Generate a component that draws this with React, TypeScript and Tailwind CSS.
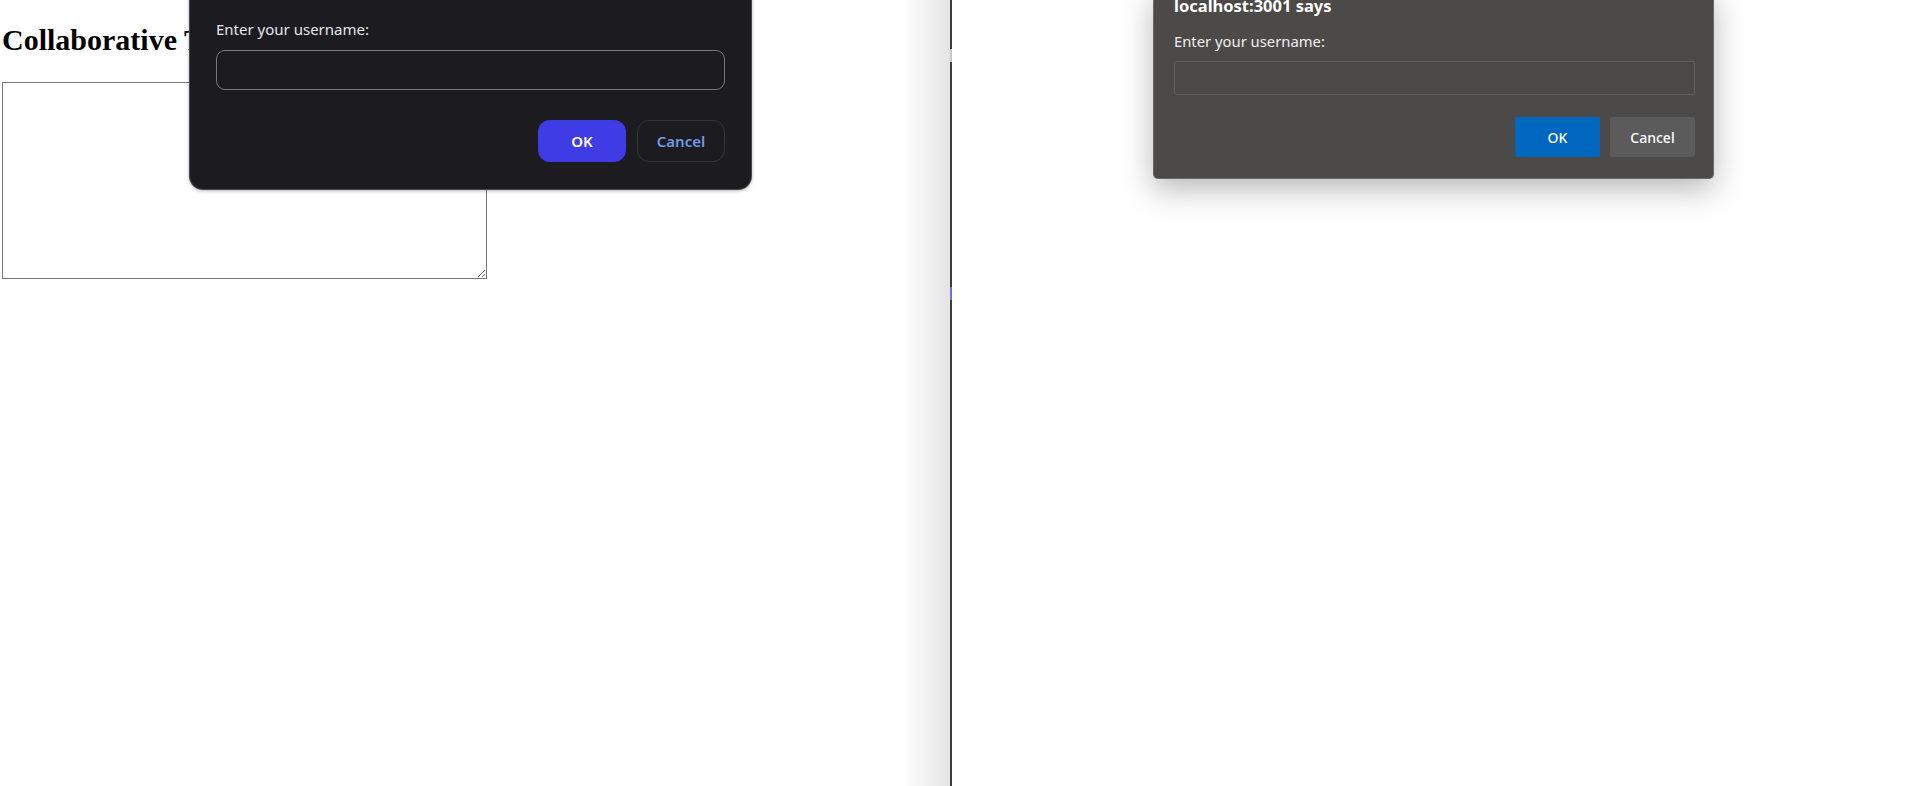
import React from 'react';

const uiFont = { fontFamily: '"Noto Sans", "Open Sans", sans-serif' };

/* Prompt sombre du navigateur de gauche (style Chrome) */
function DarkPrompt() {
  return (
    <div
      className="absolute left-[190px] top-[-40px] w-[561px] rounded-b-[13px] bg-[#1c1b20] pb-[27px] pl-[26px] pr-[26px] pt-[20px] shadow-[0_1px_4px_rgba(0,0,0,0.45)] ring-1 ring-[#48474d]"
      style={uiFont}
    >
      <p className="h-[20px] text-[16px] font-bold leading-[20px] text-white">localhost:3000 says</p>
      <p className="mt-[19px] text-[15px] leading-[20px] text-[#e6e6ea]">Enter your username:</p>
      <div className="mt-[11px] h-[40px] rounded-[9px] border-[1.5px] border-[#77767c] bg-[#1c1b20]" />
      <div className="mt-[30px] flex justify-end gap-[11px]">
        <button className="h-[42px] w-[88px] rounded-[12px] bg-[#3f3ce6] text-[15px] font-semibold text-white">OK</button>
        <button className="h-[42px] w-[88px] rounded-[12px] border border-[#34333a] text-[15px] font-semibold text-[#7399e3]">Cancel</button>
      </div>
    </div>
  );
}

/* Prompt gris du navigateur de droite (style Edge) */
function GreyPrompt() {
  return (
    <div
      className="absolute left-[1153px] top-[-10px] w-[561px] rounded-b-[5px] border border-t-0 border-[#6a6a6a] bg-[#4b4a48] pb-[21px] pl-[20px] pr-[18px] shadow-[0_10px_30px_rgba(0,0,0,0.28)]"
      style={uiFont}
    >
      <p className="pt-[6px] text-[16.5px] font-bold leading-[20px] text-white">localhost:3001 says</p>
      <p className="mt-[15px] text-[14.8px] leading-[20px] text-[#f0f0f0]">Enter your username:</p>
      <div className="mt-[10px] h-[34px] rounded-[2px] border border-[#5e5e5c] bg-[#4b4a48]" />
      <div className="mt-[22px] flex justify-end gap-[10px]">
        <button className="h-[40px] w-[85px] rounded-[2px] bg-[#0067c0] text-[14px] font-medium text-white">OK</button>
        <button className="h-[40px] w-[85px] rounded-[2px] bg-[#5b5b5b] text-[14px] font-medium text-white">Cancel</button>
      </div>
    </div>
  );
}

export default function App() {
  return (
    <div className="relative flex h-[786px] w-[1905px] overflow-hidden bg-white">
      <div className="relative w-[950px] shrink-0 bg-white">
        <div className="px-[2px]">
          <h1 className="mt-[22px] text-[30px] font-bold leading-[36px] text-black" style={{ fontFamily: '"Liberation Serif", "Times New Roman", serif' }}>
            Collaborative Text Editor
          </h1>
          <textarea className="mt-[24px] block h-[197px] w-[485px] border border-[#767676] bg-white" />
        </div>
        <div className="pointer-events-none absolute right-0 top-0 h-full w-[48px] bg-gradient-to-r from-transparent to-[#e4e4e4]" />
      </div>
      <div className="flex w-[2px] shrink-0 flex-col bg-[#3b3b3b]">
        <div className="mt-[49px] h-[13px] w-full bg-[#c8c8c8]" />
        <div className="mt-[225px] h-[13px] w-full bg-[#6d6ddd]" />
      </div>
      <div className="flex-1 bg-[#fefefe]" />
      <DarkPrompt />
      <GreyPrompt />
    </div>
  );
}
